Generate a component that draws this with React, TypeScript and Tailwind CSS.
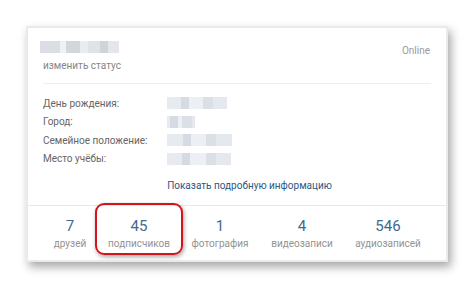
const ROWS = [
  { label: "День рождения:", w: "w-[60px]" },
  { label: "Город:", w: "w-[28px]" },
  { label: "Семейное положение:", w: "w-[65px]" },
  { label: "Место учёбы:", w: "w-[64px]" },
]

const STATS = [
  { value: "7", label: "друзей", w: "w-[68px]" },
  { value: "45", label: "подписчиков", w: "w-[70px]" },
  { value: "1", label: "фотография", w: "w-[92px]" },
  { value: "4", label: "видеозаписи", w: "w-[72px]" },
  { value: "546", label: "аудиозаписей", w: "w-[100px]" },
]

function Blur({ w }: { w: string }) {
  return (
    <div className={`${w} h-[12px] flex overflow-hidden opacity-75`}>
      <div className="flex-1 bg-[#dfe3ea]" />
      <div className="w-[8px] bg-[#c9d0da]" />
      <div className="flex-1 bg-[#e6eaef]" />
      <div className="w-[10px] bg-[#cfd6df]" />
      <div className="flex-1 bg-[#dde2e9]" />
    </div>
  )
}

export default function App() {
  return (
    <div className="w-[474px] h-[289px] bg-white pt-[26px] pl-[26px] font-['Roboto',sans-serif]">
      <div className="w-[422px] h-[236px] bg-white border-2 border-[#e9eaec] shadow-[3px_5px_9px_rgba(0,0,0,0.35)] flex flex-col">
        <div className="px-[15px] pt-[13px]">
          <div className="flex justify-between items-start">
            <div className="flex flex-col">
              <div className="flex h-[12px] w-[79px] -ml-[3px] opacity-80">
                <div className="w-[20px] bg-[#d3d7de]" />
                <div className="w-[6px] bg-[#eceef1]" />
                <div className="w-[14px] bg-[#c8ced7]" />
                <div className="w-[8px] bg-[#e4e7ec]" />
                <div className="w-[12px] bg-[#d8dce2]" />
                <div className="w-[8px] bg-[#c4c9d1]" />
                <div className="w-[11px] bg-[#dde0e5]" />
              </div>
              <span className="text-[10px] text-[#858585] mt-[6px] leading-[13px]">изменить статус</span>
            </div>
            <span className="text-[10px] text-[#9a9a9a] mt-[3px] mr-[1px] leading-[13px]">Online</span>
          </div>
          <div className="h-px bg-[#eceef1] mt-[11px]" />
          <div className="flex flex-col gap-[4px] mt-[12px]">
            {ROWS.map((r) => (
              <div key={r.label} className="flex items-center h-[14.5px]">
                <span className="w-[124px] text-[10px] text-[#656565] leading-[13px]">{r.label}</span>
                <Blur w={r.w} />
              </div>
            ))}
          </div>
          <div className="text-center text-[10px] text-[#2a5885] mt-[13px] pl-[25px] leading-[13px]">
            Показать подробную информацию
          </div>
        </div>
        <div className="h-px bg-[#e7e8ec] mt-[13px]" />
        <div className="flex pl-[8px] pt-[11px]">
          {STATS.map((s) => (
            <div key={s.label} className={`${s.w} flex flex-col items-center relative`}>
              {s.value === "45" && (
                <div className="absolute -top-[14px] -left-[9px] -right-[9px] h-[52px] border-[2.5px] border-[#d4141b] rounded-[9px] shadow-[1px_2px_4px_rgba(0,0,0,0.35)]" />
              )}
              <span className="text-[15px] text-[#45688e] leading-[18px]">{s.value}</span>
              <span className="text-[10px] text-[#939393] leading-[13px] mt-[2px]">{s.label}</span>
            </div>
          ))}
        </div>
      </div>
    </div>
  )
}
